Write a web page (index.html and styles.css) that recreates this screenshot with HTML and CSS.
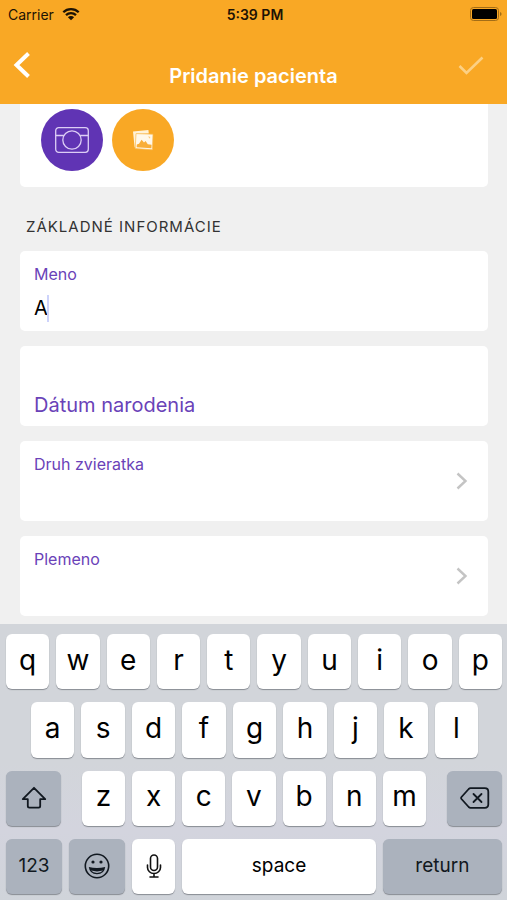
FILE: index.html
```html
<!DOCTYPE html>
<html lang="sk">
<head>
<meta charset="utf-8">
<meta name="viewport" content="width=device-width, initial-scale=1">
<title>Pridanie pacienta</title>
<link rel="stylesheet" href="styles.css">
</head>
<body>
<header class="header">
  <div class="status">
    <div class="carrier">
      <span>Carrier</span>
      <svg width="18" height="14" viewBox="0 0 18 14" aria-hidden="true">
        <path d="M1.3 5.2a11 11 0 0 1 15.4 0M4 8.2a7.2 7.2 0 0 1 10 0" fill="none" stroke="#1d1304" stroke-width="2.3"/>
        <path d="M9 13.2 5.9 10.2a4.4 4.4 0 0 1 6.2 0z" fill="#1d1304"/>
      </svg>
    </div>
    <div class="clock">5:39 PM</div>
    <svg class="battery" width="32" height="14" viewBox="0 0 32 14" aria-hidden="true">
      <rect x=".5" y=".5" width="28" height="13" rx="3" fill="none" stroke="#a36d17"/>
      <rect x="2" y="2" width="25" height="10" rx="1.5" fill="#000"/>
      <path d="M30 5v4q1.6-.6 1.6-2T30 5z" fill="#a36d17"/>
    </svg>
  </div>
  <nav class="navbar">
    <button class="nav-button" aria-label="Späť">
      <svg width="18" height="28" viewBox="0 0 18 28"><path d="M15.5 2.5 3.5 14l12 11.5" fill="none" stroke="#fff" stroke-width="4"/></svg>
    </button>
    <h1 class="title">Pridanie pacienta</h1>
    <button class="nav-button nav-done" aria-label="Uložiť" disabled>
      <svg width="26" height="20" viewBox="0 0 26 20"><path d="M1.5 11 8.5 18 24.5 2.5" fill="none" stroke="#fcd084" stroke-width="2.6"/></svg>
    </button>
  </nav>
</header>

<main class="content">
  <section class="card photos">
    <button class="round round-camera" aria-label="Odfotiť">
      <svg width="34" height="26" viewBox="0 0 34 26" fill="none" stroke="#dccdf5" stroke-width="1.3">
        <rect x=".7" y=".7" width="32.6" height="24.6" rx="3"/>
        <circle cx="17" cy="13" r="9.2"/>
        <path d="M.7 8.5h8.2M25.1 8.5h8.2"/>
      </svg>
    </button>
    <button class="round round-gallery" aria-label="Vybrať z galérie">
      <svg width="22" height="22" viewBox="0 0 22 22">
        <path d="M1 2.6 16.4 1l.4 3.6-11.8.2-.8 13.6-1.6-.2z" fill="#fff2d8"/>
        <path d="M4 4.6 21 5.2 20.4 20.8 3.2 19.6z" fill="#fff8ea" stroke="#f9b94e" stroke-width=".7"/>
        <path d="M4.8 15.6 7 14.8l2.6-4 2.4 2.8 1.6-1.6 2.2 3.2 3.8.6-.2 3.4-14.8-1z" fill="#f9ae38"/>
        <path d="m16 7.6 2.2.2-.2 2z" fill="#fbc878"/>
      </svg>
    </button>
  </section>

  <h2 class="section-title">ZÁKLADNÉ INFORMÁCIE</h2>

  <form class="fields">
    <div class="card field">
      <label class="label" for="name">Meno</label>
      <div class="entry">
        <input class="input" id="name" type="text" value="A" size="1">
        <span class="caret"></span>
      </div>
    </div>
    <div class="card field field-empty">
      <input class="input input-wide" type="text" aria-label="Dátum narodenia" placeholder="Dátum narodenia">
    </div>
    <button class="card field field-link" type="button">
      <span class="label">Druh zvieratka</span>
      <svg class="chevron" width="12" height="18" viewBox="0 0 12 18"><path d="m1.5 1.5 8 7.5-8 7.5" fill="none" stroke="#c4c4c4" stroke-width="2.4"/></svg>
    </button>
    <button class="card field field-link" type="button">
      <span class="label">Plemeno</span>
      <svg class="chevron" width="12" height="18" viewBox="0 0 12 18"><path d="m1.5 1.5 8 7.5-8 7.5" fill="none" stroke="#c4c4c4" stroke-width="2.4"/></svg>
    </button>
  </form>
</main>

<section class="keyboard" aria-label="Klávesnica">
  <div class="row">
    <button class="key">q</button><button class="key">w</button><button class="key">e</button><button class="key">r</button><button class="key">t</button><button class="key">y</button><button class="key">u</button><button class="key">i</button><button class="key">o</button><button class="key">p</button>
  </div>
  <div class="row row-home">
    <button class="key">a</button><button class="key">s</button><button class="key">d</button><button class="key">f</button><button class="key">g</button><button class="key">h</button><button class="key">j</button><button class="key">k</button><button class="key">l</button>
  </div>
  <div class="row row-shift">
    <button class="key key-dark" aria-label="Shift">
      <svg width="26" height="24" viewBox="0 0 26 24"><path d="M13 1.8 1.8 13.2h5V20q0 1.6 1.6 1.6h9.2q1.6 0 1.6-1.6v-6.8h5z" fill="none" stroke="#111820" stroke-width="1.8" stroke-linejoin="round"/></svg>
    </button>
    <div class="letters">
      <button class="key">z</button><button class="key">x</button><button class="key">c</button><button class="key">v</button><button class="key">b</button><button class="key">n</button><button class="key">m</button>
    </div>
    <button class="key key-dark" aria-label="Vymazať">
      <svg width="30" height="22" viewBox="0 0 30 22" fill="none" stroke="#111820" stroke-width="1.8" stroke-linecap="round" stroke-linejoin="round"><path d="M10.5 1.2h14.3q3.5 0 3.5 3.5v12.6q0 3.5-3.5 3.5H10.5q-1 0-1.8-.8L1.5 12q-.8-1 0-2L8.7 2q.8-.8 1.8-.8z"/><path d="m13.5 7 8 8m0-8-8 8"/></svg>
    </button>
  </div>
  <div class="row row-bottom">
    <button class="key key-dark key-word">123</button>
    <button class="key key-dark" aria-label="Emoji">
      <svg width="26" height="26" viewBox="0 0 26 26">
        <circle cx="13" cy="13" r="11.7" fill="none" stroke="#111820" stroke-width="1.6"/>
        <circle cx="9" cy="9" r="1.6" fill="#111820"/><circle cx="17" cy="9" r="1.6" fill="#111820"/>
        <path d="M4.8 14q8.2 1.8 16.4 0-.8 7.2-8.2 7.2T4.8 14z" fill="#111820"/>
        <path d="M7 17.6q6 1.6 12 0-2 2.4-6 2.4t-6-2.4z" fill="#abb2bd"/>
      </svg>
    </button>
    <button class="key" aria-label="Diktovanie">
      <svg width="16" height="24" viewBox="0 0 16 24" fill="none" stroke="#111" stroke-width="1.6" stroke-linecap="round"><rect x="4.5" y="1" width="7" height="15.5" rx="3.5"/><path d="M1.5 11v2.5a6.5 6 0 0 0 13 0V11M8 19.5V23M4 23h8"/></svg>
    </button>
    <button class="key key-word">space</button>
    <button class="key key-dark key-word">return</button>
  </div>
</section>
</body>
</html>
```
FILE: styles.css
```css
* {
  box-sizing: border-box;
}

body {
  margin: 0;
  min-height: 100vh;
  display: flex;
  flex-direction: column;
  background: #f0f0f0;
  color: #000;
  font-family: Inter, "Liberation Sans", sans-serif;
}

button,
input {
  font: inherit;
  color: inherit;
  border: 0;
  padding: 0;
  margin: 0;
  background: none;
}

svg {
  display: block;
}

.header {
  background: #f9a825;
}

.status {
  display: grid;
  grid-template-columns: 1fr auto 1fr;
  align-items: center;
  height: 28px;
  padding: 0 5px 0 8px;
  font-size: 14px;
  color: #1d1304;
}

.carrier {
  display: flex;
  align-items: center;
  gap: 8px;
}

.clock {
  font-weight: 600;
}

.battery {
  justify-self: end;
}

.navbar {
  display: grid;
  grid-template-columns: 1fr auto 1fr;
  height: 76px;
  padding: 0 13px;
}

.nav-button {
  display: flex;
  align-items: center;
  height: 74px;
}

.nav-done {
  justify-content: flex-end;
  padding-right: 10px;
}

.title {
  margin: 36px 0 0;
  font-size: 20px;
  line-height: 24px;
  font-weight: 600;
  color: #fff;
}

.content {
  flex: 1;
  padding: 0 19px 8px 20px;
}

.card {
  background: #fff;
  border-radius: 5px;
}

.photos {
  display: flex;
  gap: 9px;
  padding: 5px 21px 16px;
  border-top-left-radius: 0;
  border-top-right-radius: 0;
}

.round {
  display: grid;
  place-items: center;
  width: 62px;
  height: 62px;
  border-radius: 50%;
}

.round-camera {
  background: #6034b4;
}

.round-gallery {
  background: #f9a825;
}

.section-title {
  margin: 30px 6px 14px;
  font-size: 15px;
  line-height: 20px;
  font-weight: 400;
  letter-spacing: 1px;
  color: #333;
}

.fields {
  display: flex;
  flex-direction: column;
  gap: 15px;
}

.field {
  height: 80px;
  padding: 13px 14px 0;
}

.label {
  display: block;
  font-size: 16px;
  line-height: 20px;
  color: #6a42b8;
}

.entry {
  display: flex;
  align-items: center;
  margin-top: 10px;
}

.input {
  field-sizing: content;
  height: 28px;
  font-size: 20px;
  outline: 0;
}

.caret {
  width: 2px;
  height: 27px;
  margin-left: -1px;
  background: #cdd3fb;
}

.field-empty {
  padding-top: 45px;
}

.input-wide {
  width: 100%;
}

.input::placeholder {
  color: #6a42b8;
  opacity: 1;
}

.field-link {
  display: flex;
  justify-content: space-between;
  align-items: flex-start;
  padding-right: 20px;
  text-align: left;
}

.chevron {
  margin-top: 18px;
}

.keyboard {
  display: grid;
  grid-template-rows: repeat(4, 1fr);
  gap: 13px;
  height: 276px;
  padding: 10px 5px 6px 6px;
  background: linear-gradient(#d2d5da 50%, #d3d4de 75%, #d0d4da);
}

.row,
.letters {
  display: grid;
  grid-auto-flow: column;
  grid-auto-columns: minmax(0, 1fr);
  gap: 7px;
}

.row-home {
  padding: 0 24px 0 25px;
}

.row-shift {
  grid-template-columns: 55px 1fr 55px;
  gap: 21px;
}

.row-bottom {
  grid-template-columns: 56fr 56fr 43fr 193fr 119fr;
}

.key {
  display: flex;
  align-items: center;
  justify-content: center;
  padding-bottom: 4px;
  background: #fff;
  border-radius: 6px;
  box-shadow: 0 1px 1px #888c93;
  font-size: 28px;
  line-height: 34px;
}

.key:has(svg) {
  padding-bottom: 0;
}

.key-dark {
  background: #abb2bd;
  color: #111820;
}

.key-word {
  padding-bottom: 0;
  font-size: 19px;
}
```
